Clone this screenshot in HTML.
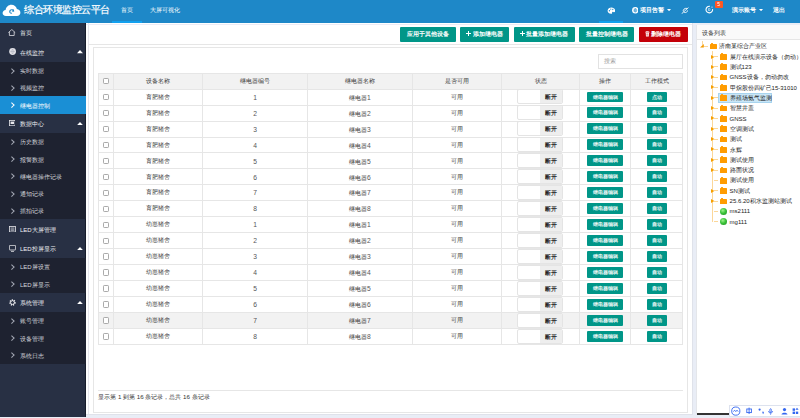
<!DOCTYPE html>
<html><head><meta charset="utf-8">
<style>
*{box-sizing:border-box;margin:0;padding:0}
html,body{width:800px;height:418px;overflow:hidden;background:#e9edf6;font-family:"Liberation Sans",sans-serif;}
.a{position:absolute;white-space:nowrap}
#hdr{position:absolute;left:0;top:0;width:800px;height:23px;background:#1e88c8;color:#fff}
#hdr .t{position:absolute;white-space:nowrap;line-height:1}
#side{position:absolute;left:0;top:23px;width:86.1px;height:393.6px;background:#283044;box-shadow:inset -0.8px 0 0 #151a26}
.mi{position:absolute;left:0;width:86px;height:19.35px;color:#f0f0f4;font-size:6px;line-height:19.35px;}
.mi .tx{position:absolute;left:20px;top:1.4px;white-space:nowrap}
.sub{position:absolute;left:0;width:86px;background:#1e2230}
.si{position:absolute;left:0;width:86px;height:17.28px;color:#d4d6dc;font-size:6px;line-height:17.28px}
.si .tx{position:absolute;left:20px;top:1.5px;white-space:nowrap}
.si.act{background:#1a8fd5;color:#fff}
.chev{position:absolute;left:9.6px;top:6.9px;width:3.6px;height:3.6px;border-right:0.65px solid #a4a8b4;border-top:0.65px solid #a4a8b4;transform:rotate(45deg)}
.tri{position:absolute;left:76.8px;top:8.1px;width:6px;height:3.2px}
#main{position:absolute;left:86px;top:23px;width:606.8px;height:391.8px;background:#fff;border-right:0.9px solid #dfe2ea;border-bottom:0.9px solid #dfe2ea}
.btn{position:absolute;top:27px;height:15px;background:#009688;color:#fff;font-size:6px;line-height:15px;text-align:center;border-radius:1px;white-space:nowrap;font-weight:bold}
.pl{display:inline-block;position:relative;width:4.9px;height:4.9px;margin-right:1.6px;vertical-align:-0.3px}.pl:before{content:"";position:absolute;left:0;top:1.85px;width:4.9px;height:1.2px;background:#fff}.pl:after{content:"";position:absolute;left:1.85px;top:0;width:1.2px;height:4.9px;background:#fff}
.hln{position:absolute;height:1px;background:#e6e6e6}
.vln{position:absolute;width:1px;background:#e6e6e6}
.dg{font-size:6.7px;color:#555}
.cell{position:absolute;text-align:center;font-size:6px;color:#3a3a3a;white-space:nowrap}
.cb{position:absolute;width:6.3px;height:6.3px;border:0.8px solid #aaa;border-radius:1.2px;background:#fff}
.sw{position:absolute;width:46.1px;height:14.9px;border:0.7px solid #e4e4e4;border-radius:2px;background:#fff;overflow:hidden}
.sw b{position:absolute;right:0;top:0;width:22.8px;height:100%;background:#eeeeee;font-weight:normal;color:#000;font-size:6.1px;line-height:13px;text-align:center;font-weight:normal;padding-left:0.6px;-webkit-text-stroke:0.12px #000}
.eb{position:absolute;height:10.75px;background:#009688;color:#fff;font-size:5.2px;line-height:10.75px;border-radius:1px;text-align:center;font-weight:normal;-webkit-text-stroke:0.12px #fff}
#rp{position:absolute;left:696.3px;top:25.3px;width:104px;height:389px;background:#fff;border-left:0.8px solid #e4e6ea;}
#rp .ttl{position:absolute;left:0;top:0;width:104px;height:14.7px;background:#fafafa;border-bottom:0.8px solid #e6e6e6;color:#333;font-size:6px;line-height:16.6px;padding-left:4.6px}
.ti{position:absolute;height:10.32px;font-size:6px;line-height:10.32px;color:#222;white-space:nowrap}
.fold{position:absolute;width:6.9px;height:5.6px;background:#ff9c00;border-radius:0.5px}
.fold:before{content:"";position:absolute;left:0.6px;top:-1px;width:2.6px;height:1.3px;background:#ff9c00;border-radius:0.5px 0.5px 0 0}
.arr{position:absolute;width:3.4px;height:4px}
.hl{position:absolute;height:0;border-top:0.6px solid #fbd79a}
.vl{position:absolute;width:0;border-left:0.6px solid #fbd79a}
.ball{position:absolute;width:7px;height:7px;border-radius:50%;background:radial-gradient(circle at 40% 35%,#9ef28a 0,#3cc43a 45%,#1a8a1a 100%)}
</style></head><body>
<div id="hdr">
<svg class="a" style="left:2px;top:4px" width="19" height="12.5" viewBox="0 0 19 12.5">
<path d="M4 12 C1.8 12 0.6 10.6 0.6 9 C0.6 7.3 1.9 6 3.6 5.9 C4.1 2.9 6.5 0.8 9.4 0.8 C12.1 0.8 14.3 2.6 14.9 5.1 C17.1 5.3 18.4 6.9 18.4 8.7 C18.4 10.6 16.9 12 14.9 12 Z" fill="#fff"/>
<path d="M11.2 5.6 C9.6 4.6 7.4 5.4 7.2 7.3 C7 9 8.6 10.1 10.2 9.6 L9.6 8.6 C8.8 8.8 8.2 8.2 8.4 7.4 C8.6 6.4 9.8 6 10.6 6.6 L9.8 7.4 L12.2 7.8 L11.9 5.2 Z" fill="#1e88c8"/></svg>
<div class="t" style="left:24px;top:5.2px;font-size:10px;letter-spacing:-0.45px;-webkit-text-stroke:0.2px #fff">综合环境监控云平台</div>
<div class="t" style="left:121.2px;top:7.3px;font-size:6px">首页</div>
<div class="a" style="left:112.1px;top:20.7px;width:29.5px;height:2.1px;background:#12a0ee"></div>
<div class="t" style="left:150px;top:7.3px;font-size:6px">大屏可视化</div>
<div class="a" style="left:599px;top:20.7px;width:24px;height:2.1px;background:#12a0ee"></div>
<svg class="a" style="left:606.5px;top:6.8px" width="8.6" height="7.4" viewBox="0 0 8.6 6.8" preserveAspectRatio="none">
<path d="M4.2 6.3 C1.6 6.3 0.4 4.6 0.6 3.2 C0.9 1.4 2.5 0.5 4.4 0.5 C6.6 0.5 8.2 1.9 8.2 3.6 C8.2 4.6 7.3 5 6.4 4.6 C5.4 4.2 4.9 4.8 5.1 5.6 C5.2 6 4.8 6.3 4.2 6.3 Z" fill="#fff"/>
<circle cx="2.4" cy="3.4" r="0.7" fill="#1e88c8"/><circle cx="3.8" cy="1.9" r="0.6" fill="#1e88c8"/><circle cx="5.8" cy="2.3" r="0.6" fill="#1e88c8"/></svg>
<svg class="a" style="left:631.6px;top:7.3px" width="6.6" height="6.6" viewBox="0 0 6.6 6.6">
<circle cx="3.3" cy="3.3" r="3.2" fill="#fff"/>
<path d="M1.3 3.3 H5.3 M3.3 1.2 C2.3 2.3 2.3 4.3 3.3 5.4 M3.3 1.2 C4.3 2.3 4.3 4.3 3.3 5.4 M1.7 2.2 H4.9 M1.7 4.4 H4.9" stroke="#1e88c8" stroke-width="0.5" fill="none"/></svg>
<div class="t" style="left:639.8px;top:7.3px;font-size:6.1px;font-weight:bold">项目告警</div>
<svg class="a" style="left:667.2px;top:9.2px" width="4.1" height="2.2" viewBox="0 0 4.1 2.2"><path d="M0 0 H4.1 L2.05 2.2 Z" fill="#fff"/></svg>
<svg class="a" style="left:681.3px;top:7.2px" width="8" height="7.2" viewBox="0 0 8 7.2">
<path d="M0.6 6.8 L7.4 0.6 M2.4 4.6 C1.6 2.8 3.6 0.9 6 1.4 M3.2 5.4 C5 6 6.6 5 6.4 3.4" stroke="#fff" stroke-width="0.9" fill="none"/></svg>
<svg class="a" style="left:705.4px;top:5.4px" width="9" height="9" viewBox="0 0 9 9">
<path d="M7.55 4.03 A3.3 3.3 0 1 1 4.87 1.35" stroke="#fff" stroke-width="1.1" fill="none"/>
<circle cx="7" cy="2.1" r="0.55" fill="#fff"/>
<rect x="3.6" y="3.8" width="1.4" height="1.6" fill="none" stroke="#fff" stroke-width="0.5"/></svg>
<div class="a" style="left:714.5px;top:1.1px;width:8.2px;height:7.4px;background:#ff5722;color:#fff;font-size:5.2px;line-height:7.4px;text-align:center;border-radius:1px">5</div>
<div class="t" style="left:731.5px;top:7.4px;font-size:6.2px;font-weight:bold">演示账号</div>
<svg class="a" style="left:758.7px;top:9.2px" width="4.1" height="2.2" viewBox="0 0 4.1 2.2"><path d="M0 0 H4.1 L2.05 2.2 Z" fill="#fff"/></svg>
<div class="t" style="left:773px;top:7.4px;font-size:6.1px;font-weight:bold">退出</div>
</div>
<div id="side">
<div class="mi" style="top:0.00px"><svg class="a" style="left:8.3px;top:6.2px" width="7.6" height="7" viewBox="0 0 7.6 7"><path d="M0.4 3.6 L3.8 0.5 L7.2 3.6 M1.4 2.8 V6.5 H6.2 V2.8" stroke="#e0e0e6" stroke-width="0.8" fill="none"/></svg><span class="tx">首页</span></div>
<div class="mi" style="top:19.35px"><svg class="a" style="left:8.8px;top:6.1px" width="7.2" height="7.2" viewBox="0 0 7.2 7.2"><circle cx="3.6" cy="3.5" r="3.4" fill="#e0e0e6"/><path d="M1.2 3.5 H6 M3.6 1 C2.6 2.2 2.6 4.8 3.6 6 M3.6 1 C4.6 2.2 4.6 4.8 3.6 6" stroke="#9a9cab" stroke-width="0.4" fill="none"/></svg><span class="tx">在线监控</span><svg class="tri" viewBox="0 0 6 3.2"><path d="M0 3.2 L3 0 L6 3.2 Z" fill="#fff"/></svg></div>
<div class="sub" style="top:38.70px;height:51.84px">
<div class="si" style="top:0.00px"><span class="chev"></span><span class="tx">实时数据</span></div>
<div class="si" style="top:17.28px"><span class="chev"></span><span class="tx">视频监控</span></div>
<div class="si act" style="top:34.56px"><span class="chev" style="border-color:#fff"></span><span class="tx">继电器控制</span></div>
</div>
<div class="mi" style="top:90.54px"><svg class="a" style="left:8.8px;top:6.5px" width="6.6" height="6.2" viewBox="0 0 6.6 6.2"><rect x="0.4" y="0.4" width="5.8" height="5.4" stroke="#e8e8ec" stroke-width="0.8" fill="none"/><rect x="1.6" y="1.6" width="3.4" height="2.4" fill="#e8e8ec"/></svg><span class="tx">数据中心</span><svg class="tri" viewBox="0 0 6 3.2"><path d="M0 3.2 L3 0 L6 3.2 Z" fill="#fff"/></svg></div>
<div class="sub" style="top:109.89px;height:86.40px">
<div class="si" style="top:0.00px"><span class="chev"></span><span class="tx">历史数据</span></div>
<div class="si" style="top:17.28px"><span class="chev"></span><span class="tx">报警数据</span></div>
<div class="si" style="top:34.56px"><span class="chev"></span><span class="tx">继电器操作记录</span></div>
<div class="si" style="top:51.84px"><span class="chev"></span><span class="tx">通知记录</span></div>
<div class="si" style="top:69.12px"><span class="chev"></span><span class="tx">抓拍记录</span></div>
</div>
<div class="mi" style="top:196.29px"><svg class="a" style="left:8.6px;top:6.5px" width="7" height="6.4" viewBox="0 0 7 6.4"><rect x="0.4" y="0.4" width="6.2" height="5.6" stroke="#e8e8ec" stroke-width="0.8" fill="none"/><path d="M1.6 2 H5.4 M1.6 3.2 H5.4 M1.6 4.4 H5.4" stroke="#e8e8ec" stroke-width="0.6"/></svg><span class="tx">LED大屏管理</span></div>
<div class="mi" style="top:215.64px"><svg class="a" style="left:8.6px;top:6.3px" width="7" height="6.8" viewBox="0 0 7 6.8"><rect x="0.4" y="0.4" width="6.2" height="4.6" rx="0.6" stroke="#e8e8ec" stroke-width="0.8" fill="none"/><path d="M2 6.4 H5" stroke="#e8e8ec" stroke-width="0.8"/></svg><span class="tx">LED投屏显示</span><svg class="tri" viewBox="0 0 6 3.2"><path d="M0 3.2 L3 0 L6 3.2 Z" fill="#fff"/></svg></div>
<div class="sub" style="top:234.99px;height:34.56px">
<div class="si" style="top:0.00px"><span class="chev"></span><span class="tx">LED屏设置</span></div>
<div class="si" style="top:17.28px"><span class="chev"></span><span class="tx">LED屏显示</span></div>
</div>
<div class="mi" style="top:269.55px"><svg class="a" style="left:8.6px;top:6.2px" width="7" height="7" viewBox="0 0 7 7"><circle cx="3.5" cy="3.5" r="2.4" stroke="#e8e8ec" stroke-width="1.6" stroke-dasharray="1.1 0.8" fill="none"/><circle cx="3.5" cy="3.5" r="1.9" stroke="#e8e8ec" stroke-width="0.8" fill="none"/></svg><span class="tx">系统管理</span><svg class="tri" viewBox="0 0 6 3.2"><path d="M0 3.2 L3 0 L6 3.2 Z" fill="#fff"/></svg></div>
<div class="sub" style="top:288.90px;height:51.84px">
<div class="si" style="top:0.00px"><span class="chev"></span><span class="tx">账号管理</span></div>
<div class="si" style="top:17.28px"><span class="chev"></span><span class="tx">设备管理</span></div>
<div class="si" style="top:34.56px"><span class="chev"></span><span class="tx">系统日志</span></div>
</div>
</div>
<div id="main"></div>
<div class="a" style="left:87.9px;top:23px;width:0.9px;height:391.4px;background:#e6e6ec"></div>
<div class="a" style="left:86px;top:24.2px;width:606px;height:0.6px;background:#ececf6"></div>
<div class="btn" style="left:400.4px;width:55.2px">应用于其他设备</div>
<div class="btn" style="left:460px;width:49.2px"><i class="pl"></i>添加继电器</div>
<div class="btn" style="left:513.6px;width:61px"><i class="pl"></i>批量添加继电器</div>
<div class="btn" style="left:579.4px;width:55.1px">批量控制继电器</div>
<div class="btn" style="left:638.9px;width:49px;background:#c40008"><svg style="vertical-align:-0.8px;margin-right:1.4px" width="4.8" height="5.6" viewBox="0 0 4.8 5.6"><path d="M0.2 1.2 H4.6 M1.5 1.2 V0.4 H3.3 V1.2" stroke="#fff" stroke-width="0.7" fill="none"/><path d="M0.7 1.8 L1 5.4 H3.8 L4.1 1.8 Z" fill="#fff"/><path d="M1.9 2.5 V4.6 M2.9 2.5 V4.6" stroke="#c40008" stroke-width="0.45"/></svg>删除继电器</div>
<div class="a" style="left:88px;top:44.2px;width:604px;height:0.8px;background:#e6e6e6"></div>
<div class="a" style="left:93px;top:47px;width:594.8px;height:365.6px;border:0.9px solid #e6e6e6"></div>
<div class="a" style="left:598.4px;top:54.4px;width:84.4px;height:14.2px;border:0.8px solid #e2e2e2;font-size:5.8px;color:#999;line-height:13px;padding-left:4.6px">搜索</div>
<div class="a" style="left:98.20px;top:73.20px;width:584.30px;height:15.95px;background:#f2f2f2"></div>
<div class="a" style="left:98.20px;top:312.45px;width:584.30px;height:15.95px;background:#f2f2f2"></div>
<div class="hln" style="left:97.70px;top:72.70px;width:585.30px"></div>
<div class="hln" style="left:97.70px;top:88.65px;width:585.30px"></div>
<div class="hln" style="left:97.70px;top:104.60px;width:585.30px"></div>
<div class="hln" style="left:97.70px;top:120.55px;width:585.30px"></div>
<div class="hln" style="left:97.70px;top:136.50px;width:585.30px"></div>
<div class="hln" style="left:97.70px;top:152.45px;width:585.30px"></div>
<div class="hln" style="left:97.70px;top:168.40px;width:585.30px"></div>
<div class="hln" style="left:97.70px;top:184.35px;width:585.30px"></div>
<div class="hln" style="left:97.70px;top:200.30px;width:585.30px"></div>
<div class="hln" style="left:97.70px;top:216.25px;width:585.30px"></div>
<div class="hln" style="left:97.70px;top:232.20px;width:585.30px"></div>
<div class="hln" style="left:97.70px;top:248.15px;width:585.30px"></div>
<div class="hln" style="left:97.70px;top:264.10px;width:585.30px"></div>
<div class="hln" style="left:97.70px;top:280.05px;width:585.30px"></div>
<div class="hln" style="left:97.70px;top:296.00px;width:585.30px"></div>
<div class="hln" style="left:97.70px;top:311.95px;width:585.30px"></div>
<div class="hln" style="left:97.70px;top:327.90px;width:585.30px"></div>
<div class="hln" style="left:97.70px;top:343.85px;width:585.30px"></div>
<div class="vln" style="left:97.70px;top:72.70px;height:272.15px"></div>
<div class="vln" style="left:112.80px;top:72.70px;height:272.15px"></div>
<div class="vln" style="left:202.10px;top:72.70px;height:272.15px"></div>
<div class="vln" style="left:306.90px;top:72.70px;height:272.15px"></div>
<div class="vln" style="left:411.90px;top:72.70px;height:272.15px"></div>
<div class="vln" style="left:501.10px;top:72.70px;height:272.15px"></div>
<div class="vln" style="left:579.00px;top:72.70px;height:272.15px"></div>
<div class="vln" style="left:630.00px;top:72.70px;height:272.15px"></div>
<div class="vln" style="left:682.00px;top:72.70px;height:272.15px"></div>
<div class="cb" style="left:102.60px;top:78.02px"></div>
<div class="cell" style="left:113.30px;top:73.80px;width:89.30px;height:15.95px;line-height:15.95px;color:#3a3a3a">设备名称</div>
<div class="cell" style="left:202.60px;top:73.80px;width:104.80px;height:15.95px;line-height:15.95px;color:#3a3a3a">继电器编号</div>
<div class="cell" style="left:307.40px;top:73.80px;width:105.00px;height:15.95px;line-height:15.95px;color:#3a3a3a">继电器名称</div>
<div class="cell" style="left:412.40px;top:73.80px;width:89.20px;height:15.95px;line-height:15.95px;color:#3a3a3a">是否可用</div>
<div class="cell" style="left:501.60px;top:73.80px;width:77.90px;height:15.95px;line-height:15.95px;color:#3a3a3a">状态</div>
<div class="cell" style="left:579.50px;top:73.80px;width:51.00px;height:15.95px;line-height:15.95px;color:#3a3a3a">操作</div>
<div class="cell" style="left:630.50px;top:73.80px;width:52.00px;height:15.95px;line-height:15.95px;color:#3a3a3a">工作模式</div>
<div class="cb" style="left:102.60px;top:93.97px"></div>
<div class="cell" style="left:113.30px;top:89.75px;width:89.30px;height:15.95px;line-height:15.95px;">育肥猪舍</div>
<div class="cell" style="left:202.60px;top:89.75px;width:104.80px;height:15.95px;line-height:15.95px;"><span class="dg">1</span></div>
<div class="cell" style="left:307.40px;top:89.75px;width:105.00px;height:15.95px;line-height:15.95px;">继电器<span class="dg">1</span></div>
<div class="cell" style="left:412.40px;top:89.75px;width:89.20px;height:15.95px;line-height:15.95px;">可用</div>
<div class="sw" style="left:517.3px;top:89.38px"><b>断开</b></div>
<div class="eb" style="left:587.1px;top:91.53px;width:36px">继电器编辑</div>
<div class="eb" style="left:646.9px;top:91.53px;width:20.2px">点动</div>
<div class="cb" style="left:102.60px;top:109.92px"></div>
<div class="cell" style="left:113.30px;top:105.70px;width:89.30px;height:15.95px;line-height:15.95px;">育肥猪舍</div>
<div class="cell" style="left:202.60px;top:105.70px;width:104.80px;height:15.95px;line-height:15.95px;"><span class="dg">2</span></div>
<div class="cell" style="left:307.40px;top:105.70px;width:105.00px;height:15.95px;line-height:15.95px;">继电器<span class="dg">2</span></div>
<div class="cell" style="left:412.40px;top:105.70px;width:89.20px;height:15.95px;line-height:15.95px;">可用</div>
<div class="sw" style="left:517.3px;top:105.32px"><b>断开</b></div>
<div class="eb" style="left:587.1px;top:107.47px;width:36px">继电器编辑</div>
<div class="eb" style="left:646.9px;top:107.47px;width:20.2px">自动</div>
<div class="cb" style="left:102.60px;top:125.88px"></div>
<div class="cell" style="left:113.30px;top:121.65px;width:89.30px;height:15.95px;line-height:15.95px;">育肥猪舍</div>
<div class="cell" style="left:202.60px;top:121.65px;width:104.80px;height:15.95px;line-height:15.95px;"><span class="dg">3</span></div>
<div class="cell" style="left:307.40px;top:121.65px;width:105.00px;height:15.95px;line-height:15.95px;">继电器<span class="dg">3</span></div>
<div class="cell" style="left:412.40px;top:121.65px;width:89.20px;height:15.95px;line-height:15.95px;">可用</div>
<div class="sw" style="left:517.3px;top:121.28px"><b>断开</b></div>
<div class="eb" style="left:587.1px;top:123.43px;width:36px">继电器编辑</div>
<div class="eb" style="left:646.9px;top:123.43px;width:20.2px">自动</div>
<div class="cb" style="left:102.60px;top:141.82px"></div>
<div class="cell" style="left:113.30px;top:137.60px;width:89.30px;height:15.95px;line-height:15.95px;">育肥猪舍</div>
<div class="cell" style="left:202.60px;top:137.60px;width:104.80px;height:15.95px;line-height:15.95px;"><span class="dg">4</span></div>
<div class="cell" style="left:307.40px;top:137.60px;width:105.00px;height:15.95px;line-height:15.95px;">继电器<span class="dg">4</span></div>
<div class="cell" style="left:412.40px;top:137.60px;width:89.20px;height:15.95px;line-height:15.95px;">可用</div>
<div class="sw" style="left:517.3px;top:137.22px"><b>断开</b></div>
<div class="eb" style="left:587.1px;top:139.38px;width:36px">继电器编辑</div>
<div class="eb" style="left:646.9px;top:139.38px;width:20.2px">自动</div>
<div class="cb" style="left:102.60px;top:157.77px"></div>
<div class="cell" style="left:113.30px;top:153.55px;width:89.30px;height:15.95px;line-height:15.95px;">育肥猪舍</div>
<div class="cell" style="left:202.60px;top:153.55px;width:104.80px;height:15.95px;line-height:15.95px;"><span class="dg">5</span></div>
<div class="cell" style="left:307.40px;top:153.55px;width:105.00px;height:15.95px;line-height:15.95px;">继电器<span class="dg">5</span></div>
<div class="cell" style="left:412.40px;top:153.55px;width:89.20px;height:15.95px;line-height:15.95px;">可用</div>
<div class="sw" style="left:517.3px;top:153.17px"><b>断开</b></div>
<div class="eb" style="left:587.1px;top:155.32px;width:36px">继电器编辑</div>
<div class="eb" style="left:646.9px;top:155.32px;width:20.2px">自动</div>
<div class="cb" style="left:102.60px;top:173.72px"></div>
<div class="cell" style="left:113.30px;top:169.50px;width:89.30px;height:15.95px;line-height:15.95px;">育肥猪舍</div>
<div class="cell" style="left:202.60px;top:169.50px;width:104.80px;height:15.95px;line-height:15.95px;"><span class="dg">6</span></div>
<div class="cell" style="left:307.40px;top:169.50px;width:105.00px;height:15.95px;line-height:15.95px;">继电器<span class="dg">6</span></div>
<div class="cell" style="left:412.40px;top:169.50px;width:89.20px;height:15.95px;line-height:15.95px;">可用</div>
<div class="sw" style="left:517.3px;top:169.12px"><b>断开</b></div>
<div class="eb" style="left:587.1px;top:171.27px;width:36px">继电器编辑</div>
<div class="eb" style="left:646.9px;top:171.27px;width:20.2px">自动</div>
<div class="cb" style="left:102.60px;top:189.67px"></div>
<div class="cell" style="left:113.30px;top:185.45px;width:89.30px;height:15.95px;line-height:15.95px;">育肥猪舍</div>
<div class="cell" style="left:202.60px;top:185.45px;width:104.80px;height:15.95px;line-height:15.95px;"><span class="dg">7</span></div>
<div class="cell" style="left:307.40px;top:185.45px;width:105.00px;height:15.95px;line-height:15.95px;">继电器<span class="dg">7</span></div>
<div class="cell" style="left:412.40px;top:185.45px;width:89.20px;height:15.95px;line-height:15.95px;">可用</div>
<div class="sw" style="left:517.3px;top:185.07px"><b>断开</b></div>
<div class="eb" style="left:587.1px;top:187.22px;width:36px">继电器编辑</div>
<div class="eb" style="left:646.9px;top:187.22px;width:20.2px">自动</div>
<div class="cb" style="left:102.60px;top:205.62px"></div>
<div class="cell" style="left:113.30px;top:201.40px;width:89.30px;height:15.95px;line-height:15.95px;">育肥猪舍</div>
<div class="cell" style="left:202.60px;top:201.40px;width:104.80px;height:15.95px;line-height:15.95px;"><span class="dg">8</span></div>
<div class="cell" style="left:307.40px;top:201.40px;width:105.00px;height:15.95px;line-height:15.95px;">继电器<span class="dg">8</span></div>
<div class="cell" style="left:412.40px;top:201.40px;width:89.20px;height:15.95px;line-height:15.95px;">可用</div>
<div class="sw" style="left:517.3px;top:201.03px"><b>断开</b></div>
<div class="eb" style="left:587.1px;top:203.18px;width:36px">继电器编辑</div>
<div class="eb" style="left:646.9px;top:203.18px;width:20.2px">自动</div>
<div class="cb" style="left:102.60px;top:221.57px"></div>
<div class="cell" style="left:113.30px;top:217.35px;width:89.30px;height:15.95px;line-height:15.95px;">幼崽猪舍</div>
<div class="cell" style="left:202.60px;top:217.35px;width:104.80px;height:15.95px;line-height:15.95px;"><span class="dg">1</span></div>
<div class="cell" style="left:307.40px;top:217.35px;width:105.00px;height:15.95px;line-height:15.95px;">继电器<span class="dg">1</span></div>
<div class="cell" style="left:412.40px;top:217.35px;width:89.20px;height:15.95px;line-height:15.95px;">可用</div>
<div class="sw" style="left:517.3px;top:216.97px"><b>断开</b></div>
<div class="eb" style="left:587.1px;top:219.12px;width:36px">继电器编辑</div>
<div class="eb" style="left:646.9px;top:219.12px;width:20.2px">自动</div>
<div class="cb" style="left:102.60px;top:237.52px"></div>
<div class="cell" style="left:113.30px;top:233.30px;width:89.30px;height:15.95px;line-height:15.95px;">幼崽猪舍</div>
<div class="cell" style="left:202.60px;top:233.30px;width:104.80px;height:15.95px;line-height:15.95px;"><span class="dg">2</span></div>
<div class="cell" style="left:307.40px;top:233.30px;width:105.00px;height:15.95px;line-height:15.95px;">继电器<span class="dg">2</span></div>
<div class="cell" style="left:412.40px;top:233.30px;width:89.20px;height:15.95px;line-height:15.95px;">可用</div>
<div class="sw" style="left:517.3px;top:232.92px"><b>断开</b></div>
<div class="eb" style="left:587.1px;top:235.07px;width:36px">继电器编辑</div>
<div class="eb" style="left:646.9px;top:235.07px;width:20.2px">自动</div>
<div class="cb" style="left:102.60px;top:253.47px"></div>
<div class="cell" style="left:113.30px;top:249.25px;width:89.30px;height:15.95px;line-height:15.95px;">幼崽猪舍</div>
<div class="cell" style="left:202.60px;top:249.25px;width:104.80px;height:15.95px;line-height:15.95px;"><span class="dg">3</span></div>
<div class="cell" style="left:307.40px;top:249.25px;width:105.00px;height:15.95px;line-height:15.95px;">继电器<span class="dg">3</span></div>
<div class="cell" style="left:412.40px;top:249.25px;width:89.20px;height:15.95px;line-height:15.95px;">可用</div>
<div class="sw" style="left:517.3px;top:248.88px"><b>断开</b></div>
<div class="eb" style="left:587.1px;top:251.03px;width:36px">继电器编辑</div>
<div class="eb" style="left:646.9px;top:251.03px;width:20.2px">自动</div>
<div class="cb" style="left:102.60px;top:269.43px"></div>
<div class="cell" style="left:113.30px;top:265.20px;width:89.30px;height:15.95px;line-height:15.95px;">幼崽猪舍</div>
<div class="cell" style="left:202.60px;top:265.20px;width:104.80px;height:15.95px;line-height:15.95px;"><span class="dg">4</span></div>
<div class="cell" style="left:307.40px;top:265.20px;width:105.00px;height:15.95px;line-height:15.95px;">继电器<span class="dg">4</span></div>
<div class="cell" style="left:412.40px;top:265.20px;width:89.20px;height:15.95px;line-height:15.95px;">可用</div>
<div class="sw" style="left:517.3px;top:264.82px"><b>断开</b></div>
<div class="eb" style="left:587.1px;top:266.97px;width:36px">继电器编辑</div>
<div class="eb" style="left:646.9px;top:266.97px;width:20.2px">自动</div>
<div class="cb" style="left:102.60px;top:285.38px"></div>
<div class="cell" style="left:113.30px;top:281.15px;width:89.30px;height:15.95px;line-height:15.95px;">幼崽猪舍</div>
<div class="cell" style="left:202.60px;top:281.15px;width:104.80px;height:15.95px;line-height:15.95px;"><span class="dg">5</span></div>
<div class="cell" style="left:307.40px;top:281.15px;width:105.00px;height:15.95px;line-height:15.95px;">继电器<span class="dg">5</span></div>
<div class="cell" style="left:412.40px;top:281.15px;width:89.20px;height:15.95px;line-height:15.95px;">可用</div>
<div class="sw" style="left:517.3px;top:280.78px"><b>断开</b></div>
<div class="eb" style="left:587.1px;top:282.93px;width:36px">继电器编辑</div>
<div class="eb" style="left:646.9px;top:282.93px;width:20.2px">自动</div>
<div class="cb" style="left:102.60px;top:301.33px"></div>
<div class="cell" style="left:113.30px;top:297.10px;width:89.30px;height:15.95px;line-height:15.95px;">幼崽猪舍</div>
<div class="cell" style="left:202.60px;top:297.10px;width:104.80px;height:15.95px;line-height:15.95px;"><span class="dg">6</span></div>
<div class="cell" style="left:307.40px;top:297.10px;width:105.00px;height:15.95px;line-height:15.95px;">继电器<span class="dg">6</span></div>
<div class="cell" style="left:412.40px;top:297.10px;width:89.20px;height:15.95px;line-height:15.95px;">可用</div>
<div class="sw" style="left:517.3px;top:296.73px"><b>断开</b></div>
<div class="eb" style="left:587.1px;top:298.88px;width:36px">继电器编辑</div>
<div class="eb" style="left:646.9px;top:298.88px;width:20.2px">自动</div>
<div class="cb" style="left:102.60px;top:317.28px"></div>
<div class="cell" style="left:113.30px;top:313.05px;width:89.30px;height:15.95px;line-height:15.95px;">幼崽猪舍</div>
<div class="cell" style="left:202.60px;top:313.05px;width:104.80px;height:15.95px;line-height:15.95px;"><span class="dg">7</span></div>
<div class="cell" style="left:307.40px;top:313.05px;width:105.00px;height:15.95px;line-height:15.95px;">继电器<span class="dg">7</span></div>
<div class="cell" style="left:412.40px;top:313.05px;width:89.20px;height:15.95px;line-height:15.95px;">可用</div>
<div class="sw" style="left:517.3px;top:312.68px"><b>断开</b></div>
<div class="eb" style="left:587.1px;top:314.82px;width:36px">继电器编辑</div>
<div class="eb" style="left:646.9px;top:314.82px;width:20.2px">自动</div>
<div class="cb" style="left:102.60px;top:333.23px"></div>
<div class="cell" style="left:113.30px;top:329.00px;width:89.30px;height:15.95px;line-height:15.95px;">幼崽猪舍</div>
<div class="cell" style="left:202.60px;top:329.00px;width:104.80px;height:15.95px;line-height:15.95px;"><span class="dg">8</span></div>
<div class="cell" style="left:307.40px;top:329.00px;width:105.00px;height:15.95px;line-height:15.95px;">继电器<span class="dg">8</span></div>
<div class="cell" style="left:412.40px;top:329.00px;width:89.20px;height:15.95px;line-height:15.95px;">可用</div>
<div class="sw" style="left:517.3px;top:328.62px"><b>断开</b></div>
<div class="eb" style="left:587.1px;top:330.77px;width:36px">继电器编辑</div>
<div class="eb" style="left:646.9px;top:330.77px;width:20.2px">自动</div>
<div class="a" style="left:98.2px;top:390px;width:584.8px;height:1px;background:#e6e6e6"></div>
<div class="a" style="left:98.2px;top:393px;font-size:6.2px;color:#333;white-space:nowrap">显示第 1 到第 16 条记录，总共 16 条记录</div>
<div id="rp"><div class="ttl">设备列表</div></div>
<div class="vl" style="left:712.2px;top:50.9px;height:170.70px"></div>
<div class="vl" style="left:702.4px;top:40.9px;height:4.5px"></div>
<svg class="a" style="left:700.3px;top:44.20px" width="3.8" height="3.4" viewBox="0 0 3.8 3.4"><path d="M3.8 0 L3.8 3.4 L0 3.4 Z" fill="#f49b00"/></svg>
<div class="hl" style="left:704.10px;top:45.70px;width:4px"></div>
<div class="fold" style="left:710.00px;top:43.80px"></div>
<div class="ti" style="left:719.40px;top:41.30px">济南某综合产业区</div>
<svg class="arr" style="left:711.3px;top:54.52px" viewBox="0 0 3.4 4"><path d="M0 0 L3.4 2 L0 4 Z" fill="#f7a000"/></svg>
<div class="hl" style="left:713.80px;top:56.02px;width:4px"></div>
<div class="fold" style="left:720.20px;top:54.12px"></div>
<div class="ti" style="left:729.60px;top:51.62px">展厅在线演示设备（勿动）</div>
<svg class="arr" style="left:711.3px;top:64.84px" viewBox="0 0 3.4 4"><path d="M0 0 L3.4 2 L0 4 Z" fill="#f7a000"/></svg>
<div class="hl" style="left:713.80px;top:66.34px;width:4px"></div>
<div class="fold" style="left:720.20px;top:64.44px"></div>
<div class="ti" style="left:729.60px;top:61.94px">测试123</div>
<svg class="arr" style="left:711.3px;top:75.16px" viewBox="0 0 3.4 4"><path d="M0 0 L3.4 2 L0 4 Z" fill="#f7a000"/></svg>
<div class="hl" style="left:713.80px;top:76.66px;width:4px"></div>
<div class="fold" style="left:720.20px;top:74.76px"></div>
<div class="ti" style="left:729.60px;top:72.26px">GNSS设备，勿动勿改</div>
<svg class="arr" style="left:711.3px;top:85.48px" viewBox="0 0 3.4 4"><path d="M0 0 L3.4 2 L0 4 Z" fill="#f7a000"/></svg>
<div class="hl" style="left:713.80px;top:86.98px;width:4px"></div>
<div class="fold" style="left:720.20px;top:85.08px"></div>
<div class="ti" style="left:729.60px;top:82.58px">甲烷股份四矿己15-31010</div>
<div class="a" style="left:718.1px;top:93.1px;width:54.4px;height:9.6px;background:#c9e6f7;border:0.6px solid #a8d4ee"></div>
<svg class="arr" style="left:711.3px;top:95.80px" viewBox="0 0 3.4 4"><path d="M0 0 L3.4 2 L0 4 Z" fill="#f7a000"/></svg>
<div class="hl" style="left:713.80px;top:97.30px;width:4px"></div>
<div class="fold" style="left:720.20px;top:95.40px"></div>
<div class="ti" style="left:729.60px;top:92.90px">养殖场氨气监测</div>
<svg class="arr" style="left:711.3px;top:106.12px" viewBox="0 0 3.4 4"><path d="M0 0 L3.4 2 L0 4 Z" fill="#f7a000"/></svg>
<div class="hl" style="left:713.80px;top:107.62px;width:4px"></div>
<div class="fold" style="left:720.20px;top:105.72px"></div>
<div class="ti" style="left:729.60px;top:103.22px">智慧井盖</div>
<svg class="arr" style="left:711.3px;top:116.44px" viewBox="0 0 3.4 4"><path d="M0 0 L3.4 2 L0 4 Z" fill="#f7a000"/></svg>
<div class="hl" style="left:713.80px;top:117.94px;width:4px"></div>
<div class="fold" style="left:720.20px;top:116.04px"></div>
<div class="ti" style="left:729.60px;top:113.54px">GNSS</div>
<svg class="arr" style="left:711.3px;top:126.76px" viewBox="0 0 3.4 4"><path d="M0 0 L3.4 2 L0 4 Z" fill="#f7a000"/></svg>
<div class="hl" style="left:713.80px;top:128.26px;width:4px"></div>
<div class="fold" style="left:720.20px;top:126.36px"></div>
<div class="ti" style="left:729.60px;top:123.86px">空调测试</div>
<svg class="arr" style="left:711.3px;top:137.08px" viewBox="0 0 3.4 4"><path d="M0 0 L3.4 2 L0 4 Z" fill="#f7a000"/></svg>
<div class="hl" style="left:713.80px;top:138.58px;width:4px"></div>
<div class="fold" style="left:720.20px;top:136.68px"></div>
<div class="ti" style="left:729.60px;top:134.18px">测试</div>
<svg class="arr" style="left:711.3px;top:147.40px" viewBox="0 0 3.4 4"><path d="M0 0 L3.4 2 L0 4 Z" fill="#f7a000"/></svg>
<div class="hl" style="left:713.80px;top:148.90px;width:4px"></div>
<div class="fold" style="left:720.20px;top:147.00px"></div>
<div class="ti" style="left:729.60px;top:144.50px">永辉</div>
<svg class="arr" style="left:711.3px;top:157.72px" viewBox="0 0 3.4 4"><path d="M0 0 L3.4 2 L0 4 Z" fill="#f7a000"/></svg>
<div class="hl" style="left:713.80px;top:159.22px;width:4px"></div>
<div class="fold" style="left:720.20px;top:157.32px"></div>
<div class="ti" style="left:729.60px;top:154.82px">测试使用</div>
<svg class="arr" style="left:711.3px;top:168.04px" viewBox="0 0 3.4 4"><path d="M0 0 L3.4 2 L0 4 Z" fill="#f7a000"/></svg>
<div class="hl" style="left:713.80px;top:169.54px;width:4px"></div>
<div class="fold" style="left:720.20px;top:167.64px"></div>
<div class="ti" style="left:729.60px;top:165.14px">路面状况</div>
<div class="hl" style="left:713.80px;top:179.86px;width:4px"></div>
<div class="fold" style="left:720.20px;top:177.96px"></div>
<div class="ti" style="left:729.60px;top:175.46px">测试使用</div>
<svg class="arr" style="left:711.3px;top:188.68px" viewBox="0 0 3.4 4"><path d="M0 0 L3.4 2 L0 4 Z" fill="#f7a000"/></svg>
<div class="hl" style="left:713.80px;top:190.18px;width:4px"></div>
<div class="fold" style="left:720.20px;top:188.28px"></div>
<div class="ti" style="left:729.60px;top:185.78px">SN测试</div>
<svg class="arr" style="left:711.3px;top:199.00px" viewBox="0 0 3.4 4"><path d="M0 0 L3.4 2 L0 4 Z" fill="#f7a000"/></svg>
<div class="hl" style="left:713.80px;top:200.50px;width:4px"></div>
<div class="fold" style="left:720.20px;top:198.60px"></div>
<div class="ti" style="left:729.60px;top:196.10px">25.6.20积水监测站测试</div>
<div class="hl" style="left:713.80px;top:210.82px;width:4px"></div>
<div class="ball" style="left:720.10px;top:207.82px"></div>
<div class="ti" style="left:729.60px;top:206.42px">ms2111</div>
<div class="hl" style="left:713.80px;top:221.14px;width:4px"></div>
<div class="ball" style="left:720.10px;top:218.14px"></div>
<div class="ti" style="left:729.60px;top:216.74px">mg111</div>
<div class="a" style="left:697px;top:413px;width:32px;height:1.6px;background:#333"></div>
<div class="a" style="left:728.6px;top:405.2px;width:72px;height:11.8px;background:#fff;border:0.8px solid #dde2ee;border-right:none"></div>
<svg class="a" style="left:728.6px;top:405.2px" width="72" height="12" viewBox="0 0 72 12">
<g stroke="#3366f0" fill="none" stroke-width="0.9">
<circle cx="6.8" cy="6.1" r="4.1"/>
<path d="M4.4 6.6 L5.6 5.2 L6.8 6.6 L8 5.2 L9.2 6.6"/>
<rect x="17.8" y="4" width="4.6" height="3.6"/><path d="M20.1 2.6 V9"/>
<path d="M41.6 3.6 C40.6 3.6 40.6 7.6 41.6 7.6 C42.6 7.6 42.6 3.6 41.6 3.6 Z M39.6 6.2 C39.6 8.6 43.6 8.6 43.6 6.2 M41.6 8.6 V9.6"/>
</g>
<g fill="#3366f0">
<circle cx="30.6" cy="4.6" r="1.1"/><path d="M33.8 6.6 C35.2 6.6 35.2 8.2 34 9.2 L33.8 8.4 C33.2 8.2 33.2 6.6 33.8 6.6 Z"/>
<circle cx="55.5" cy="4.6" r="1.6"/><path d="M52.5 9.6 C52.8 7 58.2 7 58.5 9.6 Z"/>
<rect x="63.6" y="3.4" width="2.4" height="2.4"/><rect x="63.6" y="6.6" width="2.4" height="2.4"/><rect x="66.8" y="6.6" width="2.4" height="2.4"/><path d="M68 2.8 L69.6 4.8 H66.4 Z"/>
</g></svg>
</body></html>
